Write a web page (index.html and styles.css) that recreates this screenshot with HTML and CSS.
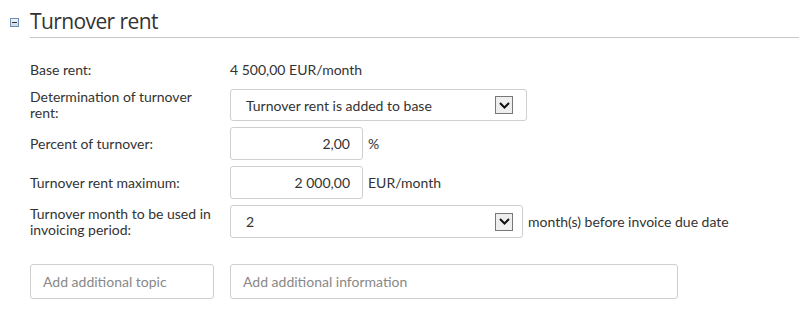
FILE: index.html
```html
<!DOCTYPE html>
<html lang="en">
<head>
    <meta charset="UTF-8">
    <title>Turnover rent</title>
    <link rel="stylesheet" href="styles.css">
</head>
<body>
    <div class="panel">
        <div class="panel-head">
            <span class="toggle"><span class="minus"></span></span>
            <h2>Turnover rent</h2>
        </div>

        <div class="form">
            <div class="label">Base rent:</div>
            <div class="value text">4 500,00 EUR/month</div>

            <div class="label">Determination of turnover rent:</div>
            <div class="value">
                <div class="select wide">
                    <span>Turnover rent is added to base</span>
                    <span class="arrow"><svg width="11" height="7" viewBox="0 0 11 7"><path d="M1 1 L5.5 5.5 L10 1" fill="none" stroke="#111" stroke-width="2"/></svg></span>
                </div>
            </div>

            <div class="label">Percent of turnover:</div>
            <div class="value">
                <div class="input num">2,00</div>
                <span class="unit">%</span>
            </div>

            <div class="label">Turnover rent maximum:</div>
            <div class="value">
                <div class="input num">2 000,00</div>
                <span class="unit">EUR/month</span>
            </div>

            <div class="label">Turnover month to be used in invoicing period:</div>
            <div class="value">
                <div class="select month">
                    <span>2</span>
                    <span class="arrow"><svg width="11" height="7" viewBox="0 0 11 7"><path d="M1 1 L5.5 5.5 L10 1" fill="none" stroke="#111" stroke-width="2"/></svg></span>
                </div>
                <span class="unit">month(s) before invoice due date</span>
            </div>
        </div>

        <div class="extra">
            <div class="input placeholder topic">Add additional topic</div>
            <div class="input placeholder info">Add additional information</div>
        </div>
    </div>
</body>
</html>
```

FILE: styles.css
```css
body {
    margin: 0;
    font-family: 'Lato', sans-serif;
    font-size: 14px;
    color: #333;
    background: #fff;
}

.panel {
    padding: 7px 0 0 10px;
}

.panel-head {
    display: flex;
    align-items: center;
    gap: 11px;
}

.toggle {
    width: 7px;
    height: 7px;
    border: 1px solid #6d8fb8;
    background: linear-gradient(#f4f7fb, #c9d6e6);
    display: flex;
    align-items: center;
    justify-content: center;
}

.minus {
    width: 5px;
    height: 1px;
    background: #333;
}

.panel-head h2 {
    flex: 1;
    margin: 0;
    font-family: 'Open Sans', sans-serif;
    font-weight: 400;
    font-size: 21px;
    letter-spacing: -0.6px;
    color: #333;
    line-height: 28px;
    padding-bottom: 2px;
    border-bottom: 1px solid #c8c8c8;
}

.form {
    display: grid;
    grid-template-columns: 190px auto;
    column-gap: 10px;
    row-gap: 6px;
    margin: 19px 0 0 20px;
    align-items: center;
}

.label {
    line-height: 16px;
}

.value {
    display: flex;
    align-items: center;
    gap: 5px;
}

.value.text {
    height: 25px;
    margin-bottom: 1px;
}

.input,
.select {
    box-sizing: border-box;
    height: 33px;
    border: 1px solid #cfcfcf;
    border-radius: 3px;
    display: flex;
    align-items: center;
    padding: 0 12px;
}

.input.num {
    width: 133px;
    justify-content: flex-end;
}

.select {
    justify-content: space-between;
    padding: 0 13px 0 15px;
}

.select.wide {
    width: 297px;
    height: 32px;
}

.select.month {
    width: 293px;
    padding-left: 15px;
    padding-right: 9px;
}

.arrow {
    width: 16px;
    height: 16px;
    border: 1px solid #777;
    background: #eee;
    display: flex;
    align-items: center;
    justify-content: center;
}

.extra {
    display: flex;
    gap: 16px;
    margin: 26px 0 0 20px;
}

.placeholder {
    height: 35px;
    color: #888;
}

.topic {
    width: 184px;
}

.info {
    width: 448px;
}
```
